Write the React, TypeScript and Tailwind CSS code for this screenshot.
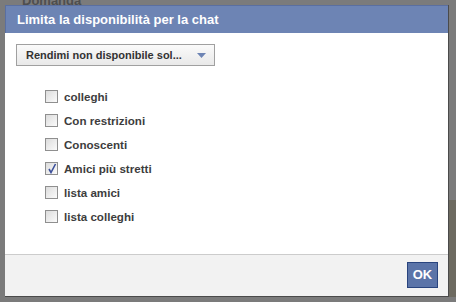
import React from "react";

const lists = [
  { label: "colleghi", checked: false },
  { label: "Con restrizioni", checked: false },
  { label: "Conoscenti", checked: false },
  { label: "Amici più stretti", checked: true },
  { label: "lista amici", checked: false },
  { label: "lista colleghi", checked: false },
];

function Box({ checked }: { checked: boolean }) {
  return (
    <span className="relative w-[13px] h-[13px] border border-[#8f8f8f] bg-gradient-to-br from-[#dcdcdc] to-[#fbfbfb] shrink-0">
      {checked && (
        <svg className="absolute left-[1px] top-[0px]" width="10" height="11" viewBox="0 0 10 11">
          <path d="M2 6 L4 9.5 L8.5 1" stroke="#3b4f9a" strokeWidth="1.6" fill="none" />
        </svg>
      )}
    </span>
  );
}

export default function App() {
  return (
    <div className="relative w-[456px] h-[302px] overflow-hidden bg-[#7b7b7b] pt-[5px] pl-[5px] font-['Liberation_Sans',sans-serif]">
      {/* page behind the overlay */}
      <div className="absolute left-[22px] top-[-9px] text-[13px] font-bold text-[#4e4e4e]">Domanda</div>
      <div className="absolute left-[449px] top-[200px] w-[7px] h-[97px] bg-[#6d6a60]" />

      <div className="relative flex flex-col w-[444px] h-[292px] border-r border-b border-[#4a4a4a]">
        <div className="h-[28px] bg-[#6d84b4] border-t border-l border-[#5a6fa0] flex items-center pl-[11px]">
          <span className="text-white text-[13px] font-bold">Limita la disponibilità per la chat</span>
        </div>
        <div className="flex-1 bg-white pt-[11px] pl-[11px]">
          <div className="w-[199px] h-[22px] border border-[#a0a0a0] bg-gradient-to-b from-[#fafafa] to-[#e9e9e9] flex items-center pl-[9px] pr-[8px] justify-between">
            <span className="text-[11px] font-bold text-[#333]">Rendimi non disponibile sol...</span>
            <svg width="9" height="5" viewBox="0 0 9 5">
              <path d="M0 0 H9 L4.5 5 Z" fill="#6d84b4" />
            </svg>
          </div>
          <div className="flex flex-col gap-[11px] mt-[24px] ml-[29px]">
            {lists.map((l) => (
              <label key={l.label} className="flex items-center gap-[6px] h-[13px]">
                <Box checked={l.checked} />
                <span className="text-[11.6px] font-bold text-[#3d3d3d]">{l.label}</span>
              </label>
            ))}
          </div>
        </div>
        <div className="h-[42px] bg-[#f2f2f2] border-t border-[#cccccc] flex justify-end items-start pt-[7px] pr-[10px]">
          <button className="w-[31px] h-[26px] bg-[#5b74a8] border border-[#29447e] text-white text-[13px] font-bold">
            OK
          </button>
        </div>
      </div>
    </div>
  );
}
